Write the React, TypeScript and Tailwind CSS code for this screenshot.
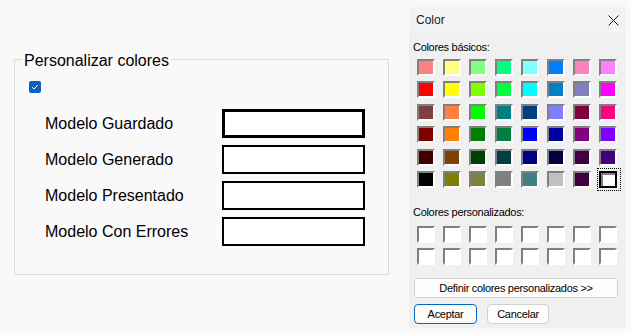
import React from "react";

const basic: string[] = [
  "#FF8080", "#FFFF80", "#80FF80", "#00FF80", "#80FFFF", "#0080FF", "#FF80C0", "#FF80FF",
  "#FF0000", "#FFFF00", "#80FF00", "#00FF40", "#00FFFF", "#0080C0", "#8080C0", "#FF00FF",
  "#804040", "#FF8040", "#00FF00", "#008080", "#004080", "#8080FF", "#800040", "#FF0080",
  "#800000", "#FF8000", "#008000", "#008040", "#0000FF", "#0000A0", "#800080", "#8000FF",
  "#400000", "#804000", "#004000", "#004040", "#000080", "#000040", "#400040", "#400080",
  "#000000", "#808000", "#808040", "#808080", "#408080", "#C0C0C0", "#400040", "#FFFFFF",
];

function Swatch({ color, selected }: { color: string; selected?: boolean }) {
  if (selected) {
    return (
      <div className="relative w-[18px] h-[17px]">
        <div className="absolute left-[-2px] top-[-3px] w-[24px] h-[23px] border border-dotted border-black" />
        <div className="absolute inset-0 border-2 border-black">
          <div
            className="w-full h-full border-t-2 border-l-2 border-t-[#808080] border-l-[#808080]"
            style={{ backgroundColor: color }}
          />
        </div>
      </div>
    );
  }
  return (
    <div className="w-[18px] h-[17px] border-2 border-t-[#808080] border-l-[#808080] border-b-white border-r-white">
      <div className="w-full h-full" style={{ backgroundColor: color }} />
    </div>
  );
}

const labels = ["Modelo Guardado", "Modelo Generado", "Modelo Presentado", "Modelo Con Errores"];

export default function App() {
  return (
    <div
      className="w-[631px] h-[333px] bg-[#f9f9f9] flex text-black overflow-hidden"
      style={{ fontFamily: '"Liberation Sans", Arial, sans-serif' }}
    >
      {/* Left panel */}
      <div className="w-[409px] pt-[59px] pl-[14px]">
        <div className="relative w-[375px] h-[216px] border border-[#dcdcdc] pl-[14px] pt-[21px]">
          <div className="absolute left-[7px] top-[-9px] px-[2px] bg-[#f9f9f9] text-[16px] leading-[19px]">
            Personalizar colores
          </div>
          <div className="w-[12px] h-[12px] rounded-[2px] bg-[#0f5fbf] flex items-center justify-center">
            <svg width="8" height="8" viewBox="0 0 8 8" fill="none">
              <path d="M1.2 4.2 L3.1 6 L6.8 2" stroke="#ffffff" strokeWidth="1" />
            </svg>
          </div>
          <div className="mt-[16px] flex flex-col gap-[7px]">
            {labels.map((l, i) => (
              <div key={l} className="flex items-center h-[29px]">
                <div className="w-[193px] pl-[16px] text-[16px] leading-[19px]">{l}</div>
                <div
                  className={
                    "w-[143px] h-[29px] bg-white border-black " + (i === 0 ? "border-[3px]" : "border-2")
                  }
                />
              </div>
            ))}
          </div>
        </div>
      </div>

      {/* Color dialog */}
      <div className="mt-[7px] w-[217px] h-[321px] bg-[#f0f0f0] flex flex-col">
        <div className="h-[26px] bg-[#f3f3f3] flex items-center justify-between pl-[7px] pr-[7px]">
          <span className="text-[12px] leading-[14px] text-[#1a1a1a]">Color</span>
          <svg width="11" height="11" viewBox="0 0 11 11" fill="none">
            <path d="M0.5 0.5 L10.5 10.5 M10.5 0.5 L0.5 10.5" stroke="#1a1a1a" strokeWidth="1" />
          </svg>
        </div>
        <div className="pt-[7px] pl-[4px] flex flex-col">
          <div className="text-[11px] leading-[14px] tracking-[-0.3px]">Colores básicos:</div>
          <div className="mt-[5px] ml-[4px] grid grid-cols-[repeat(8,18px)] gap-x-[8px] gap-y-[5.4px]">
            {basic.map((c, i) => (
              <Swatch key={i} color={c} selected={i === basic.length - 1} />
            ))}
          </div>
          <div className="mt-[17px] text-[11px] leading-[14px] tracking-[-0.3px]">Colores personalizados:</div>
          <div className="mt-[7px] ml-[4px] grid grid-cols-[repeat(8,18px)] gap-x-[8px] gap-y-[5px]">
            {Array.from({ length: 16 }).map((_, i) => (
              <Swatch key={i} color="#ffffff" />
            ))}
          </div>
          <button className="mt-[13px] ml-[1px] w-[204px] h-[20px] rounded-[4px] border border-[#d0d0d0] bg-[#fdfdfd] text-[11px] leading-[14px] tracking-[-0.3px] flex items-center justify-center">
            Definir colores personalizados &gt;&gt;
          </button>
          <div className="mt-[6px] ml-[1px] flex gap-[10px]">
            <button className="w-[63px] h-[20px] rounded-[4px] border border-[#0067c0] bg-[#fdfdfd] text-[11px] leading-[14px] tracking-[-0.3px] flex items-center justify-center">
              Aceptar
            </button>
            <button className="w-[62px] h-[20px] rounded-[4px] border border-[#d0d0d0] bg-[#fdfdfd] text-[11px] leading-[14px] tracking-[-0.3px] flex items-center justify-center">
              Cancelar
            </button>
          </div>
        </div>
      </div>
    </div>
  );
}
